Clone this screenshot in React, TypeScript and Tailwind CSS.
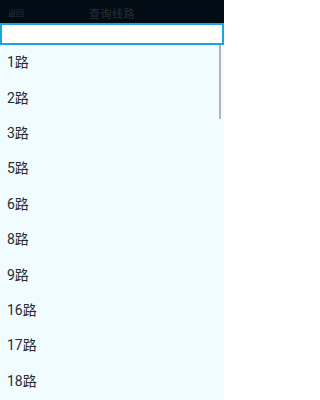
const lines = ['1路', '2路', '3路', '5路', '6路', '8路', '9路', '16路', '17路', '18路'];

export default function App() {
  return (
    <div className="flex h-[400px] w-[224px] flex-col overflow-hidden bg-[#f0fcff] font-['Roboto','Noto_Sans_CJK_SC',sans-serif]">
      <header className="relative flex h-[23px] shrink-0 items-center bg-[#020c14] pt-[5px]">
        <span className="pl-[8px] text-[8px] leading-none text-[#2c3236]">返回</span>
        <span className="absolute left-1/2 -translate-x-1/2 pt-[1px] text-[11px] leading-none tracking-[0.5px] text-[#2a3034]">
          查询线路
        </span>
      </header>
      <input className="h-[22px] w-full shrink-0 border-2 border-[#1ba3de] bg-white outline-none" />
      <div className="relative flex-1">
        <ul>
          {lines.map((line) => (
            <li key={line} className="flex h-[35.4px] items-center pl-[7px] text-[14px] text-[#2b2b2b]">
              {line}
            </li>
          ))}
        </ul>
        <div className="absolute right-[3px] top-0 h-[74px] w-[2px] bg-[#b4b4b4]" />
      </div>
    </div>
  );
}
